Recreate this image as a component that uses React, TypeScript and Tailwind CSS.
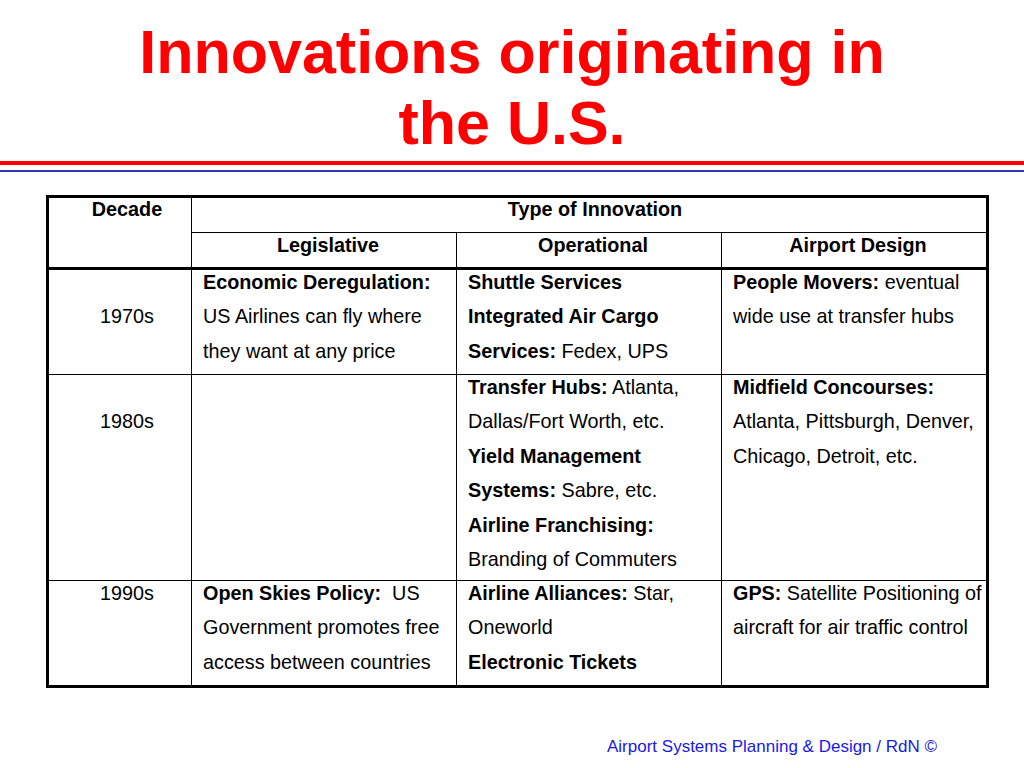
import React from 'react';

type Seg = { b?: string; t?: string };
type Line = Seg[];

const rows: { decade: string; decadeLine: number; cells: Line[][] }[] = [
  {
    decade: '1970s',
    decadeLine: 1,
    cells: [
      [[{ b: 'Economic Deregulation:' }], [{ t: 'US Airlines can fly where' }], [{ t: 'they want at any price' }]],
      [[{ b: 'Shuttle Services' }], [{ b: 'Integrated Air Cargo' }], [{ b: 'Services:', t: ' Fedex, UPS' }]],
      [[{ b: 'People Movers:', t: ' eventual' }], [{ t: 'wide use at transfer hubs' }]],
    ],
  },
  {
    decade: '1980s',
    decadeLine: 1,
    cells: [
      [],
      [
        [{ b: 'Transfer Hubs:', t: ' Atlanta,' }],
        [{ t: 'Dallas/Fort Worth, etc.' }],
        [{ b: 'Yield Management' }],
        [{ b: 'Systems:', t: ' Sabre, etc.' }],
        [{ b: 'Airline Franchising:' }],
        [{ t: 'Branding of Commuters' }],
      ],
      [[{ b: 'Midfield Concourses:' }], [{ t: 'Atlanta, Pittsburgh, Denver,' }], [{ t: 'Chicago, Detroit, etc.' }]],
    ],
  },
  {
    decade: '1990s',
    decadeLine: 0,
    cells: [
      [[{ b: 'Open Skies Policy:', t: '  US' }], [{ t: 'Government promotes free' }], [{ t: 'access between countries' }]],
      [[{ b: 'Airline Alliances:', t: ' Star,' }], [{ t: 'Oneworld' }], [{ b: 'Electronic Tickets' }]],
      [[{ b: 'GPS:', t: ' Satellite Positioning of' }], [{ t: 'aircraft for air traffic control' }]],
    ],
  },
];

const rowHeights = ['h-[107px] border-t-[3px]', 'h-[206px] border-t', 'h-[105px] border-t'];

function Lines({ lines }: { lines: Line[] }) {
  return (
    <div className="-mt-[5px]">
      {lines.map((line, i) => (
        <div key={i} className="whitespace-pre leading-[34.4px]">
          {line.map((s, j) => (
            <React.Fragment key={j}>
              {s.b && <span className="font-bold">{s.b}</span>}
              {s.t && <span>{s.t}</span>}
            </React.Fragment>
          ))}
        </div>
      ))}
    </div>
  );
}

export default function App() {
  return (
    <div className="w-[1024px] h-[768px] bg-white text-black font-['Liberation_Sans',Arial,sans-serif] flex flex-col">
      <h1 className="pt-[17px] text-center text-[61px] leading-[71px] font-bold text-[#ff0000]">
        Innovations originating in
        <br />
        the U.S.
      </h1>
      <div className="mt-[2px] h-[4px] bg-[#ff0000]" />
      <div className="mt-[5px] h-[2px] bg-[#3333bb]" />

      <div className="ml-[46px] mt-[23px] w-[943px] border-[3px] border-black text-[19.8px]">
        <div className="grid grid-cols-[142px_265px_265px_265px] grid-rows-[34px_35px]">
          <div className="row-span-2 pl-[14px] text-center font-bold">
            <div className="-mt-[6px] leading-[34.4px]">Decade</div>
          </div>
          <div className="col-span-3 border-l border-black pl-[12px] text-center font-bold">
            <div className="-mt-[6px] leading-[34.4px]">Type of Innovation</div>
          </div>
          {['Legislative', 'Operational', 'Airport Design'].map((h) => (
            <div key={h} className="border-l border-t border-black pl-[8px] text-center font-bold">
              <div className="-mt-[5px] leading-[34.4px]">{h}</div>
            </div>
          ))}
        </div>
        {rows.map((r, ri) => (
          <div
            key={r.decade}
            className={`grid grid-cols-[142px_265px_265px_265px] border-black ${rowHeights[ri]}`}
          >
            <div className="pl-[14px] text-center">
              <div className="-mt-[5px] leading-[34.4px]" style={{ paddingTop: r.decadeLine * 34.4 }}>
                {r.decade}
              </div>
            </div>
            {r.cells.map((c, ci) => (
              <div key={ci} className="border-l border-black pl-[11px]">
                <Lines lines={c} />
              </div>
            ))}
          </div>
        ))}
      </div>

      <div className="mt-auto mb-[9px] pl-[607px] text-[17px] text-[#1a1ae6]">
        Airport Systems Planning &amp; Design / RdN ©
      </div>
    </div>
  );
}
